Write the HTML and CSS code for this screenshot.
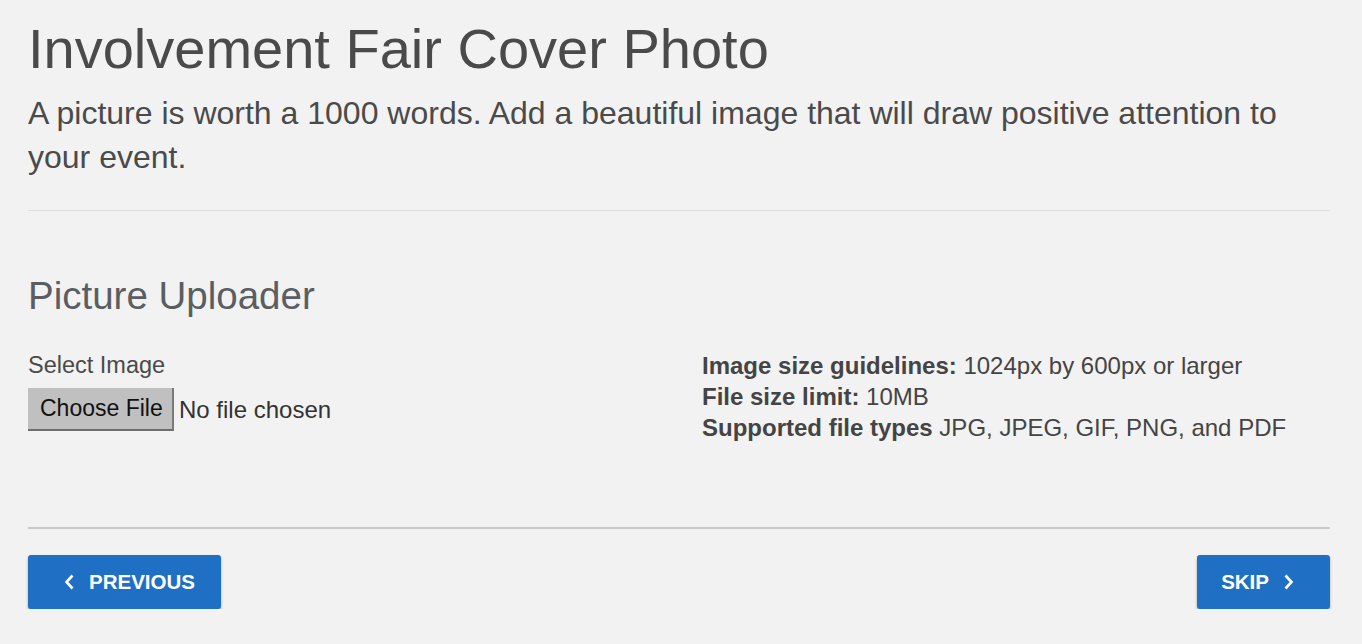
FILE: index.html
```html
<!DOCTYPE html>
<html lang="en">
    <head>
        <meta charset="utf-8"/>
        <title>Involvement Fair Cover Photo</title>
        <link rel="stylesheet" href="styles.css">
    </head>
    <body>
        <div class="page">
            <h1 class="pageTitle">Involvement Fair Cover Photo</h1>
            <p class="lead">A picture is worth a 1000 words. Add a beautiful image that will draw positive attention to your event.</p>
            <hr class="rule">

            <h2 class="sectionTitle">Picture Uploader</h2>
            <div class="uploader">
                <div class="field">
                    <label class="fieldLabel" for="cover">Select Image</label>
                    <div class="fileRow">
                        <label class="fileButton" for="cover">Choose File</label>
                        <span class="fileName">No file chosen</span>
                        <input class="fileInput" id="cover" type="file">
                    </div>
                </div>
                <div class="guidelines">
                    <div><b>Image size guidelines:</b> 1024px by 600px or larger</div>
                    <div><b>File size limit:</b> 10MB</div>
                    <div><b>Supported file types</b> JPG, JPEG, GIF, PNG, and PDF</div>
                </div>
            </div>

            <hr class="rule ruleDark">
            <div class="nav">
                <button class="navButton navPrev" type="button">
                    <svg class="chevron" viewBox="0 0 11 16" width="11" height="16"><path d="M8.5 1.5 L2.5 8 L8.5 14.5" fill="none" stroke="currentColor" stroke-width="2.6"/></svg>
                    PREVIOUS
                </button>
                <button class="navButton navNext" type="button">
                    SKIP
                    <svg class="chevron" viewBox="0 0 11 16" width="11" height="16"><path d="M2.5 1.5 L8.5 8 L2.5 14.5" fill="none" stroke="currentColor" stroke-width="2.6"/></svg>
                </button>
            </div>
        </div>
    </body>
</html>
```

FILE: styles.css
```css
body {
    margin: 0;
    background: #f2f2f2;
    font-family: "Liberation Sans", Arial, sans-serif;
    color: #4a4a4a;
}

.page {
    padding: 0 32px 0 28px;
}

.pageTitle {
    margin: 0;
    padding-top: 14px;
    font-size: 56px;
    font-weight: normal;
    line-height: 70px;
    color: #4a4a4a;
}

.lead {
    margin: 7px 0 0;
    font-size: 32px;
    line-height: 44px;
}

.rule {
    margin: 31px 0 0;
    border: 0;
    border-top: 1px solid #dedede;
}

.ruleDark {
    margin-top: 84px;
    border-top: 2px solid #cacaca;
}

.sectionTitle {
    margin: 62px 0 0;
    font-size: 38.5px;
    font-weight: normal;
    line-height: 46px;
    color: #5a5e62;
}

.uploader {
    display: grid;
    grid-template-columns: 674px 1fr;
    margin-top: 31px;
}

.fieldLabel {
    display: block;
    font-size: 23.5px;
    line-height: 30px;
}

.fileRow {
    display: flex;
    align-items: center;
    margin-top: 8px;
}

.fileButton {
    box-sizing: border-box;
    width: 146px;
    height: 43px;
    padding-left: 12px;
    display: flex;
    align-items: center;
    background: #c0c0c0;
    border-right: 2px solid #7a7a7a;
    border-bottom: 2px solid #6e6e6e;
    color: #111;
    font-size: 23px;
}

.fileName {
    margin-left: 5px;
    font-size: 24px;
    color: #333;
}

.fileInput {
    display: none;
}

.guidelines {
    font-size: 24px;
    line-height: 31px;
    color: #444;
}

.nav {
    display: flex;
    justify-content: space-between;
    margin-top: 26px;
}

.navButton {
    display: flex;
    align-items: center;
    gap: 14px;
    height: 54px;
    border: 0;
    border-radius: 3px;
    background: #1f6fc5;
    box-shadow: 0 2px 3px rgba(0, 0, 0, 0.3);
    color: white;
    font-family: "Liberation Sans", Arial, sans-serif;
    font-weight: bold;
    font-size: 20.5px;
}

.navPrev {
    padding: 0 26px 0 36px;
}

.navNext {
    padding: 0 36px 0 24px;
}

.chevron {
    display: block;
}
```
